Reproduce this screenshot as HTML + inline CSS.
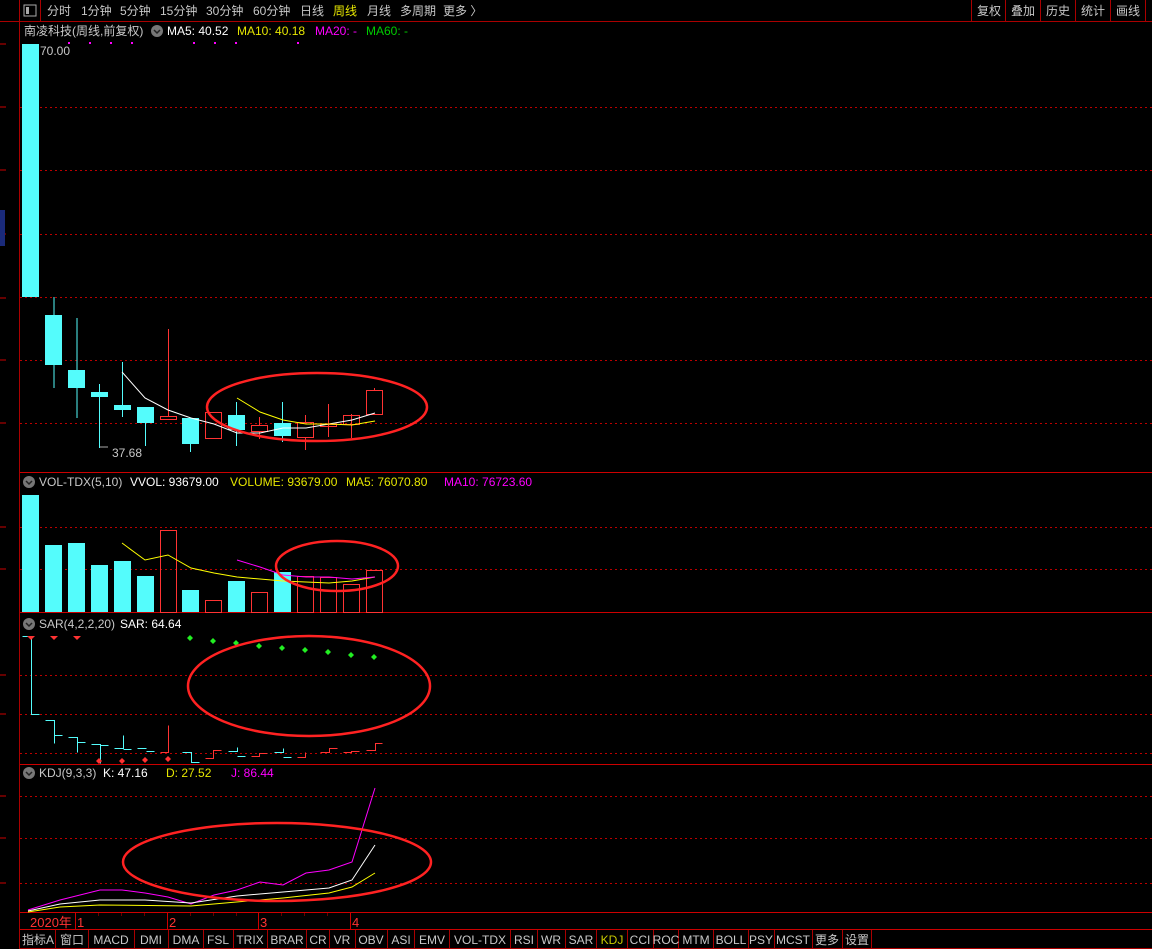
<!DOCTYPE html>
<html><head><meta charset="utf-8"><style>
html,body{margin:0;padding:0;background:#000;}
svg{display:block;font-family:"Liberation Sans","Noto Sans CJK SC",sans-serif;}
</style></head><body>
<svg width="1152" height="949" viewBox="0 0 1152 949" xmlns="http://www.w3.org/2000/svg">
<rect width="1152" height="949" fill="#000"/>
<line x1="0" y1="21.5" x2="1152" y2="21.5" stroke="#a00" stroke-width="1"/>
<line x1="19.5" y1="0" x2="19.5" y2="949" stroke="#a00"/>
<line x1="40.5" y1="0" x2="40.5" y2="21" stroke="#a00"/>
<rect x="24" y="5" width="12" height="11" fill="none" stroke="#aaa"/><rect x="26" y="7" width="3" height="7" fill="#aaa"/>
<g font-size="12" fill="#c8c8c8">
<text x="47" y="15">分时</text><text x="81" y="15">1分钟</text><text x="120" y="15">5分钟</text><text x="160" y="15">15分钟</text><text x="206" y="15">30分钟</text><text x="253" y="15">60分钟</text><text x="300" y="15">日线</text><text x="333" y="15" fill="#e6e600">周线</text><text x="367" y="15">月线</text><text x="400" y="15">多周期</text><text x="443" y="15">更多 〉</text>
<text x="977" y="15">复权</text><text x="1011" y="15">叠加</text><text x="1046" y="15">历史</text><text x="1081" y="15">统计</text><text x="1116" y="15">画线</text>
</g>
<g stroke="#a00"><line x1="971.5" y1="0" x2="971.5" y2="21"/><line x1="1005.5" y1="0" x2="1005.5" y2="21"/><line x1="1040.5" y1="0" x2="1040.5" y2="21"/><line x1="1075.5" y1="0" x2="1075.5" y2="21"/><line x1="1110.5" y1="0" x2="1110.5" y2="21"/><line x1="1145.5" y1="0" x2="1145.5" y2="21"/></g>
<g stroke="#c00">
<line x1="0" y1="44" x2="6" y2="44"/><line x1="0" y1="107" x2="6" y2="107"/><line x1="0" y1="170" x2="6" y2="170"/><line x1="0" y1="234" x2="6" y2="234"/><line x1="0" y1="298" x2="6" y2="298"/><line x1="0" y1="360" x2="6" y2="360"/><line x1="0" y1="423" x2="6" y2="423"/>
<line x1="0" y1="527" x2="6" y2="527"/><line x1="0" y1="569" x2="6" y2="569"/><line x1="0" y1="675" x2="6" y2="675"/><line x1="0" y1="714" x2="6" y2="714"/><line x1="0" y1="796" x2="6" y2="796"/><line x1="0" y1="838" x2="6" y2="838"/><line x1="0" y1="883" x2="6" y2="883"/>
</g>
<rect x="0" y="210" width="5" height="36" fill="#1a2a7a"/>
<g stroke="#c00"><line x1="20" y1="472.5" x2="1152" y2="472.5"/><line x1="20" y1="612.5" x2="1152" y2="612.5"/><line x1="20" y1="764.5" x2="1152" y2="764.5"/><line x1="20" y1="912.5" x2="1152" y2="912.5"/><line x1="20" y1="929.5" x2="1152" y2="929.5"/></g>
<g stroke="#b00" stroke-dasharray="2,3">
<line x1="20" y1="107.5" x2="1152" y2="107.5"/><line x1="20" y1="170.5" x2="1152" y2="170.5"/><line x1="20" y1="234.5" x2="1152" y2="234.5"/><line x1="20" y1="297.5" x2="1152" y2="297.5"/><line x1="20" y1="360.5" x2="1152" y2="360.5"/><line x1="20" y1="423.5" x2="1152" y2="423.5"/>
<line x1="20" y1="527.5" x2="1152" y2="527.5"/><line x1="20" y1="569.5" x2="1152" y2="569.5"/>
<line x1="20" y1="675.5" x2="1152" y2="675.5"/><line x1="20" y1="714.5" x2="1152" y2="714.5"/><line x1="20" y1="753.5" x2="1152" y2="753.5"/>
<line x1="20" y1="796.5" x2="1152" y2="796.5"/><line x1="20" y1="838.5" x2="1152" y2="838.5"/><line x1="20" y1="883.5" x2="1152" y2="883.5"/>
</g>
<g font-size="12">
<text x="24" y="35" fill="#c8c8c8">南凌科技(周线,前复权)</text>
<circle cx="157" cy="31" r="6" fill="#777"/><path d="M154 30l3 3 3-3" stroke="#222" fill="none" stroke-width="1.5"/>
<text x="167" y="35" fill="#fff">MA5: 40.52</text><text x="237" y="35" fill="#e6e600">MA10: 40.18</text><text x="315" y="35" fill="#f0f">MA20: -</text><text x="366" y="35" fill="#0c0">MA60: -</text>
<text x="40" y="55" fill="#c8c8c8">70.00</text>
<text x="112" y="457" fill="#c8c8c8">37.68</text>
</g>
<g fill="#f0f"><rect x="68" y="42" width="2" height="2"/><rect x="89" y="42" width="2" height="2"/><rect x="110" y="42" width="2" height="2"/><rect x="131" y="42" width="2" height="2"/><rect x="193" y="42" width="2" height="2"/><rect x="214" y="42" width="2" height="2"/><rect x="235" y="42" width="2" height="2"/><rect x="297" y="42" width="2" height="2"/></g>
<path d="M100 447H108" stroke="#aaa"/>
<g stroke="#54fcfc" fill="#54fcfc">
<rect x="22" y="44" width="17" height="253" stroke="none"/>
<line x1="54" y1="297" x2="54" y2="388"/><rect x="45" y="315" width="17" height="50" stroke="none"/>
<line x1="77" y1="318" x2="77" y2="418"/><rect x="68" y="370" width="17" height="18" stroke="none"/>
<line x1="99.5" y1="384" x2="99.5" y2="448"/><rect x="91" y="392" width="17" height="5" stroke="none"/>
<line x1="122.5" y1="362" x2="122.5" y2="417"/><rect x="114" y="405" width="17" height="5" stroke="none"/>
<line x1="145.5" y1="407" x2="145.5" y2="446"/><rect x="137" y="407" width="17" height="16" stroke="none"/>
<line x1="190.5" y1="418" x2="190.5" y2="452"/><rect x="182" y="418" width="17" height="26" stroke="none"/>
<line x1="236.5" y1="402" x2="236.5" y2="446"/><rect x="228" y="415" width="17" height="15" stroke="none"/>
<line x1="282.5" y1="402" x2="282.5" y2="442"/><rect x="274" y="423" width="17" height="13" stroke="none"/>
</g>
<g stroke="#f33" fill="none">
<line x1="168.5" y1="329" x2="168.5" y2="416"/><rect x="160.5" y="416.5" width="16" height="3"/>
<rect x="205.5" y="412.5" width="16" height="26"/>
<line x1="259.5" y1="417" x2="259.5" y2="425"/><line x1="259.5" y1="431" x2="259.5" y2="439"/><rect x="251.5" y="425.5" width="16" height="6"/>
<line x1="305.5" y1="415" x2="305.5" y2="422"/><line x1="305.5" y1="437" x2="305.5" y2="450"/><rect x="297.5" y="422.5" width="16" height="15"/>
<line x1="328.5" y1="404" x2="328.5" y2="437"/><rect x="320.5" y="424.5" width="16" height="2"/>
<line x1="351.5" y1="414" x2="351.5" y2="438"/><rect x="343.5" y="415.5" width="16" height="9"/>
<line x1="374.5" y1="388" x2="374.5" y2="390"/><rect x="366.5" y="390.5" width="16" height="24"/>
</g>
<polyline points="122,372 145,398 168,410 191,418 214,424 237,433 260,433 283,428 306,428 329,424 352,420 375,413" fill="none" stroke="#fff"/>
<polyline points="237,398 260,412 283,420 306,424 329,424 352,425 375,421" fill="none" stroke="#ff0"/>
<ellipse cx="317" cy="407" rx="110" ry="34" fill="none" stroke="#f22" stroke-width="2.5"/>
<g font-size="12">
<circle cx="29" cy="482" r="6" fill="#777"/><path d="M26 481l3 3 3-3" stroke="#222" fill="none" stroke-width="1.5"/>
<text x="39" y="486" fill="#c8c8c8">VOL-TDX(5,10)</text><text x="130" y="486" fill="#fff">VVOL: 93679.00</text><text x="230" y="486" fill="#e6e600">VOLUME: 93679.00</text><text x="346" y="486" fill="#e6e600">MA5: 76070.80</text><text x="444" y="486" fill="#f0f">MA10: 76723.60</text>
</g>
<g fill="#54fcfc">
<rect x="22" y="495" width="17" height="117"/><rect x="45" y="545" width="17" height="67"/><rect x="68" y="543" width="17" height="69"/><rect x="91" y="565" width="17" height="47"/><rect x="114" y="561" width="17" height="51"/><rect x="137" y="576" width="17" height="36"/><rect x="182" y="590" width="17" height="22"/><rect x="228" y="581" width="17" height="31"/><rect x="274" y="572" width="17" height="40"/>
</g>
<g fill="none" stroke="#f33">
<rect x="160.5" y="530.5" width="16" height="82"/><rect x="205.5" y="600.5" width="16" height="12"/><rect x="251.5" y="592.5" width="16" height="20"/><rect x="297.5" y="576.5" width="16" height="36"/><rect x="320.5" y="577.5" width="16" height="35"/><rect x="343.5" y="584.5" width="16" height="28"/><rect x="366.5" y="570.5" width="16" height="42"/>
</g>
<polyline points="122,543 145,560 168,555 191,568 214,573 237,577 260,579 283,581 306,582 329,583 352,581 375,577" fill="none" stroke="#ff0"/>
<polyline points="237,560 260,567 283,575 306,577 329,577 352,579 375,577" fill="none" stroke="#f0f"/>
<ellipse cx="337" cy="566" rx="61" ry="25" fill="none" stroke="#f22" stroke-width="2.5"/>
<g font-size="12">
<circle cx="29" cy="624" r="6" fill="#777"/><path d="M26 623l3 3 3-3" stroke="#222" fill="none" stroke-width="1.5"/>
<text x="39" y="628" fill="#c8c8c8">SAR(4,2,2,20)</text><text x="120" y="628" fill="#fff">SAR: 64.64</text>
</g>
<g stroke="#54fcfc" fill="none" transform="translate(0.5,0.5)">
<path d="M22 636H31V714H39"/><path d="M45 720H54V743M54 735H62"/><path d="M68 737H77V752M77 742H85"/><path d="M91 744H100V763M100 745H108"/><path d="M114 748H123V735M123 749H131"/><path d="M137 748H146M146 751H154"/><path d="M182 752H191V762H199"/><path d="M228 751H237V747M237 756H245"/><path d="M274 752H283V748M283 757H291"/>
</g>
<g stroke="#f33" fill="none" transform="translate(0.5,0.5)">
<path d="M160 752H168V725"/><path d="M205 758H213V750H221"/><path d="M251 756H259V753H267"/><path d="M297 757H305V752"/><path d="M320 752H329V748H337"/><path d="M343 752H351V751H359"/><path d="M366 750H375V743H382"/>
</g>
<g fill="#f33"><path d="M27 636h8l-4 4z"/><path d="M50 636h8l-4 4z"/><path d="M73 636h8l-4 4z"/>
<path d="M99 758l3 3-3 3-3-3z"/><path d="M122 758l3 3-3 3-3-3z"/><path d="M145 757l3 3-3 3-3-3z"/><path d="M168 756l3 3-3 3-3-3z"/></g>
<g fill="#2e2"><path d="M190 635l3 3-3 3-3-3z"/><path d="M213 638l3 3-3 3-3-3z"/><path d="M236 640l3 3-3 3-3-3z"/><path d="M259 643l3 3-3 3-3-3z"/><path d="M282 645l3 3-3 3-3-3z"/><path d="M305 647l3 3-3 3-3-3z"/><path d="M328 649l3 3-3 3-3-3z"/><path d="M351 652l3 3-3 3-3-3z"/><path d="M374 654l3 3-3 3-3-3z"/></g>
<ellipse cx="309" cy="686" rx="121" ry="50" fill="none" stroke="#f22" stroke-width="2.5"/>
<g font-size="12">
<circle cx="29" cy="773" r="6" fill="#777"/><path d="M26 772l3 3 3-3" stroke="#222" fill="none" stroke-width="1.5"/>
<text x="39" y="777" fill="#c8c8c8">KDJ(9,3,3)</text><text x="103" y="777" fill="#fff">K: 47.16</text><text x="166" y="777" fill="#e6e600">D: 27.52</text><text x="231" y="777" fill="#f0f">J: 86.44</text>
</g>
<polyline points="28,910 60,900 100,890 122,890 145,893 168,897 191,904 214,895 237,890 260,882 283,885 306,873 329,870 352,862 375,788" fill="none" stroke="#f0f"/>
<polyline points="28,911 60,904 100,900 145,900 191,903 237,896 283,892 329,888 352,880 375,845" fill="none" stroke="#fff"/>
<polyline points="28,912 60,907 100,905 191,906 283,898 329,893 352,887 375,873" fill="none" stroke="#ff0"/>
<ellipse cx="277" cy="862" rx="154" ry="39" fill="none" stroke="#f22" stroke-width="2.5"/>
<g font-size="13" fill="#f33"><text x="30" y="927">2020年</text><text x="77" y="927">1</text><text x="169" y="927">2</text><text x="260" y="927">3</text><text x="352" y="927">4</text></g>
<g stroke="#c00"><line x1="75.5" y1="913" x2="75.5" y2="929"/><line x1="167.5" y1="913" x2="167.5" y2="929"/><line x1="258.5" y1="913" x2="258.5" y2="929"/><line x1="350.5" y1="913" x2="350.5" y2="929"/></g>
<g stroke="#600"><line x1="98.5" y1="913" x2="98.5" y2="916"/><line x1="121.5" y1="913" x2="121.5" y2="916"/><line x1="144.5" y1="913" x2="144.5" y2="916"/><line x1="190.5" y1="913" x2="190.5" y2="916"/><line x1="213.5" y1="913" x2="213.5" y2="916"/><line x1="236.5" y1="913" x2="236.5" y2="916"/><line x1="281.5" y1="913" x2="281.5" y2="916"/><line x1="304.5" y1="913" x2="304.5" y2="916"/><line x1="327.5" y1="913" x2="327.5" y2="916"/></g>
<line x1="20" y1="948.5" x2="1152" y2="948.5" stroke="#a00"/>
<g stroke="#a00">
<line x1="55.5" y1="930" x2="55.5" y2="949"/><line x1="88.5" y1="930" x2="88.5" y2="949"/><line x1="134.5" y1="930" x2="134.5" y2="949"/><line x1="168.5" y1="930" x2="168.5" y2="949"/><line x1="203.5" y1="930" x2="203.5" y2="949"/><line x1="233.5" y1="930" x2="233.5" y2="949"/><line x1="267.5" y1="930" x2="267.5" y2="949"/><line x1="306.5" y1="930" x2="306.5" y2="949"/><line x1="329.5" y1="930" x2="329.5" y2="949"/><line x1="355.5" y1="930" x2="355.5" y2="949"/><line x1="387.5" y1="930" x2="387.5" y2="949"/><line x1="414.5" y1="930" x2="414.5" y2="949"/><line x1="449.5" y1="930" x2="449.5" y2="949"/><line x1="510.5" y1="930" x2="510.5" y2="949"/><line x1="537.5" y1="930" x2="537.5" y2="949"/><line x1="565.5" y1="930" x2="565.5" y2="949"/><line x1="596.5" y1="930" x2="596.5" y2="949"/><line x1="627.5" y1="930" x2="627.5" y2="949"/><line x1="653.5" y1="930" x2="653.5" y2="949"/><line x1="678.5" y1="930" x2="678.5" y2="949"/><line x1="713.5" y1="930" x2="713.5" y2="949"/><line x1="748.5" y1="930" x2="748.5" y2="949"/><line x1="774.5" y1="930" x2="774.5" y2="949"/><line x1="812.5" y1="930" x2="812.5" y2="949"/><line x1="842.5" y1="930" x2="842.5" y2="949"/><line x1="871.5" y1="930" x2="871.5" y2="949"/>
</g>
<g font-size="12" fill="#c8c8c8" text-anchor="middle">
<text x="38" y="944">指标A</text><text x="72" y="944">窗口</text><text x="111" y="944">MACD</text><text x="151" y="944">DMI</text><text x="186" y="944">DMA</text><text x="218" y="944">FSL</text><text x="250" y="944">TRIX</text><text x="287" y="944">BRAR</text><text x="318" y="944">CR</text><text x="342" y="944">VR</text><text x="371" y="944">OBV</text><text x="401" y="944">ASI</text><text x="432" y="944">EMV</text><text x="480" y="944">VOL-TDX</text><text x="524" y="944">RSI</text><text x="551" y="944">WR</text><text x="581" y="944">SAR</text><text x="612" y="944" fill="#c8c800">KDJ</text><text x="640" y="944">CCI</text><text x="666" y="944">ROC</text><text x="696" y="944">MTM</text><text x="731" y="944">BOLL</text><text x="761" y="944">PSY</text><text x="793" y="944">MCST</text><text x="827" y="944">更多</text><text x="857" y="944">设置</text>
</g>
</svg>
</body></html>
